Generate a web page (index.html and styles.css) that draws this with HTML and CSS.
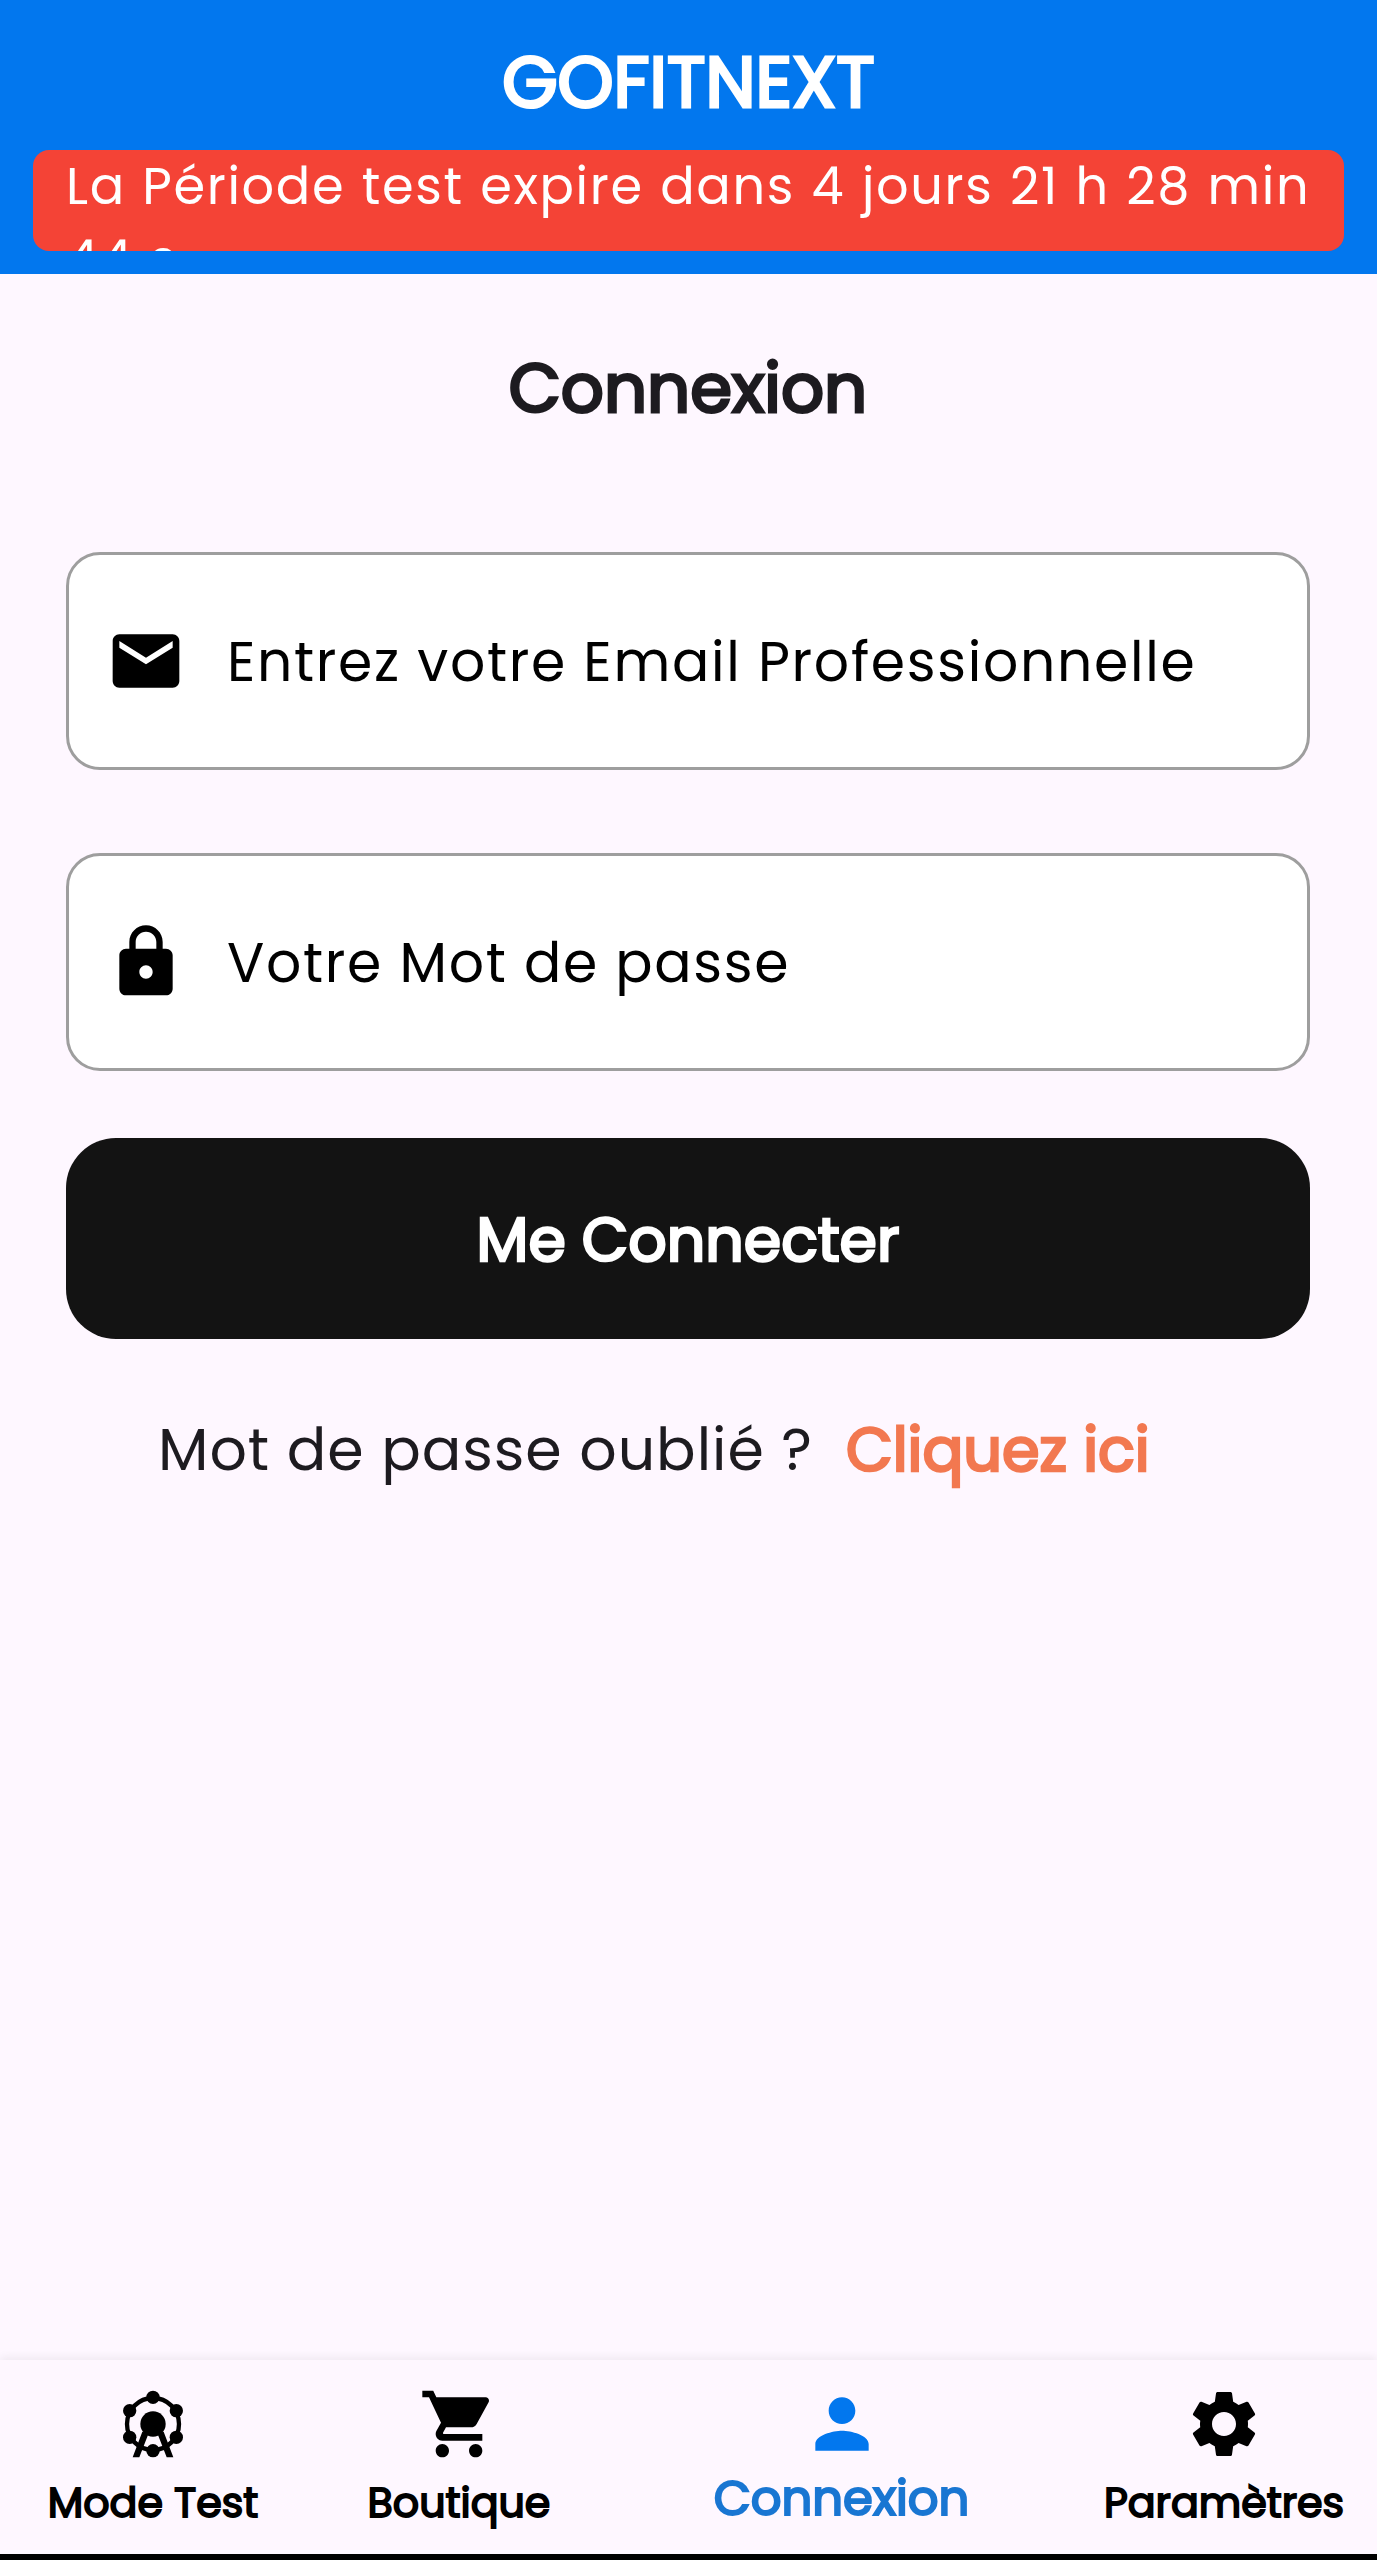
FILE: index.html
```html
<!DOCTYPE html>
<html lang="fr">
<head>
<meta charset="utf-8">
<title>GOFITNEXT</title>
<link rel="stylesheet" href="styles.css">
</head>
<body>
<header class="topbar">
  <h1 class="brand">GOFITNEXT</h1>
  <p class="trial">La Période test expire dans 4 jours 21 h 28 min 44 s</p>
</header>
<main class="login">
  <h2 class="heading">Connexion</h2>
  <div class="field">
    <svg class="icon" viewBox="0 0 24 24"><path d="M20 4H4c-1.1 0-1.99.9-1.99 2L2 18c0 1.1.9 2 2 2h16c1.1 0 2-.9 2-2V6c0-1.1-.9-2-2-2zm0 4l-8 5-8-5V6l8 5 8-5v2z"/></svg>
    <span class="hint">Entrez votre Email Professionnelle</span>
  </div>
  <div class="field">
    <svg class="icon" viewBox="0 0 24 24"><path d="M18 8h-1V6c0-2.76-2.24-5-5-5S7 3.24 7 6v2H6c-1.1 0-2 .9-2 2v10c0 1.1.9 2 2 2h12c1.1 0 2-.9 2-2V10c0-1.1-.9-2-2-2zm-6 9c-1.1 0-2-.9-2-2s.9-2 2-2 2 .9 2 2-.9 2-2 2zm3.1-9H8.9V6c0-1.71 1.39-3.1 3.1-3.1s3.1 1.39 3.1 3.1v2z"/></svg>
    <span class="hint">Votre Mot de passe</span>
  </div>
  <button class="submit" type="button">Me Connecter</button>
  <p class="forgot"><span class="question">Mot de passe oublié ?</span><a class="link">Cliquez ici</a></p>
</main>
<nav class="tabs">
  <a class="tab">
    <svg class="icon" viewBox="0 0 24 24"><circle cx="12" cy="12" r="7.8" fill="none" stroke="currentColor" stroke-width="1.3"/><circle cx="12" cy="12" r="3.8"/><circle cx="12" cy="4" r="2"/><circle cx="12" cy="20" r="2"/><circle cx="5" cy="8" r="2"/><circle cx="19" cy="8" r="2"/><circle cx="5" cy="16" r="2"/><circle cx="19" cy="16" r="2"/><path d="M8.8 14.3L10.7 14.8 7.9 22H5.9zM15.2 14.3L13.3 14.8 16.1 22h2z"/></svg>
    <span class="label">Mode Test</span>
  </a>
  <a class="tab">
    <svg class="icon" viewBox="0 0 24 24"><path d="M7 18c-1.1 0-1.99.9-1.99 2S5.9 22 7 22s2-.9 2-2-.9-2-2-2zM1 2v2h2l3.6 7.59-1.35 2.45c-.16.28-.25.61-.25.96 0 1.1.9 2 2 2h12v-2H7.42c-.14 0-.25-.11-.25-.25l.03-.12.9-1.63h7.45c.75 0 1.41-.41 1.75-1.03l3.58-6.49c.08-.14.12-.31.12-.48 0-.55-.45-1-1-1H5.21l-.94-2H1zm16 16c-1.1 0-1.99.9-1.99 2s.89 2 1.99 2 2-.9 2-2-.9-2-2-2z"/></svg>
    <span class="label">Boutique</span>
  </a>
  <a class="tab tab-active">
    <svg class="icon" viewBox="0 0 24 24"><path d="M12 12c2.21 0 4-1.79 4-4s-1.79-4-4-4-4 1.79-4 4 1.79 4 4 4zm0 2c-2.67 0-8 1.34-8 4v2h16v-2c0-2.66-5.33-4-8-4z"/></svg>
    <span class="label">Connexion</span>
  </a>
  <a class="tab">
    <svg class="icon" viewBox="0 0 24 24"><path d="M19.14 12.94c.04-.3.06-.61.06-.94 0-.32-.02-.64-.07-.94l2.03-1.58c.18-.14.23-.41.12-.61l-1.92-3.32c-.12-.22-.37-.29-.59-.22l-2.39.96c-.5-.38-1.03-.7-1.62-.94l-.36-2.54c-.04-.24-.24-.41-.48-.41h-3.84c-.24 0-.43.17-.47.41l-.36 2.54c-.59.24-1.13.57-1.62.94l-2.39-.96c-.22-.08-.47 0-.59.22L2.74 8.87c-.12.21-.08.47.12.61l2.03 1.58c-.05.3-.09.63-.09.94s.02.64.07.94l-2.03 1.58c-.18.14-.23.41-.12.61l1.92 3.32c.12.22.37.29.59.22l2.39-.96c.5.38 1.03.7 1.62.94l.36 2.54c.05.24.24.41.48.41h3.84c.24 0 .44-.17.47-.41l.36-2.54c.59-.24 1.13-.56 1.62-.94l2.39.96c.22.08.47 0 .59-.22l1.92-3.32c.12-.22.07-.47-.12-.61l-2.01-1.58zM12 15.6c-1.98 0-3.6-1.62-3.6-3.6s1.62-3.6 3.6-3.6 3.6 1.62 3.6 3.6-1.62 3.6-3.6 3.6z"/></svg>
    <span class="label">Paramètres</span>
  </a>
</nav>
</body>
</html>
```
FILE: styles.css
```css
* { box-sizing: border-box; margin: 0; padding: 0; }

body {
  display: flex;
  flex-direction: column;
  height: 2560px;
  background: #fef7ff;
  color: #1d1b20;
  font-family: Poppins, Inter, sans-serif;
}

.icon { display: block; flex: none; width: 80px; height: 80px; fill: currentColor; }

/* Emphasised text: the regular cut, thickened by an outline */
.brand, .heading, .submit, .link, .label {
  font-weight: 400;
  -webkit-text-stroke: .044em currentColor;
}

.topbar {
  flex: none;
  display: flex;
  flex-direction: column;
  align-items: center;
  height: 274px;
  padding: 42px 33px 0;
  background: #0277ee;
  color: #fff;
}
.brand { font-size: 71.2px; line-height: 80px; }
.trial {
  width: 100%;
  height: 101px;
  margin-top: 28px;
  padding: 0 16px 0 33px;
  overflow: hidden;
  border-radius: 16px;
  background: #f44336;
  font-size: 51px;
  letter-spacing: 1.63px;
  word-spacing: 1.3px;
  line-height: 73px;
}

.login {
  flex: 1;
  display: flex;
  flex-direction: column;
  padding: 75px 67px 0 66px;
}
.heading { margin-bottom: 123px; font-size: 67.4px; line-height: 80px; text-align: center; }
.field {
  display: flex;
  align-items: center;
  gap: 41px;
  height: 218px;
  margin-bottom: 83px;
  padding: 0 37px;
  border: 3px solid #9e9e9e;
  border-radius: 34px;
  background: #fff;
  color: #000;
  font-size: 55.2px;
  letter-spacing: 1.7px;
}
.hint { white-space: nowrap; }
.submit {
  height: 201px;
  margin-top: -16px;
  padding-top: 3px;
  border: 0;
  border-radius: 50px;
  background: #131313;
  color: #fff;
  font-family: inherit;
  font-size: 60.2px;
}
.forgot {
  display: flex;
  align-items: center;
  gap: 33px;
  margin-top: 71px;
  padding-left: 92px;
  line-height: 80px;
}
.question { font-size: 58.6px; letter-spacing: .95px; }
.link { color: #f27850; font-size: 60.5px; }

.tabs {
  flex: none;
  display: flex;
  height: 200px;
  border-bottom: 6px solid #000;
  box-shadow: 0 -3px 8px rgba(0, 0, 0, .06);
  color: #000;
}
.tab {
  flex: 2;
  display: flex;
  flex-direction: column;
  align-items: center;
  gap: 19px;
  padding-top: 24px;
}
.tab-active { flex: 3; gap: 14px; color: #0277ee; }
.label { font-size: 41.2px; line-height: 40px; }
.tab-active .label { color: #1976d2; font-size: 48.1px; }
```
